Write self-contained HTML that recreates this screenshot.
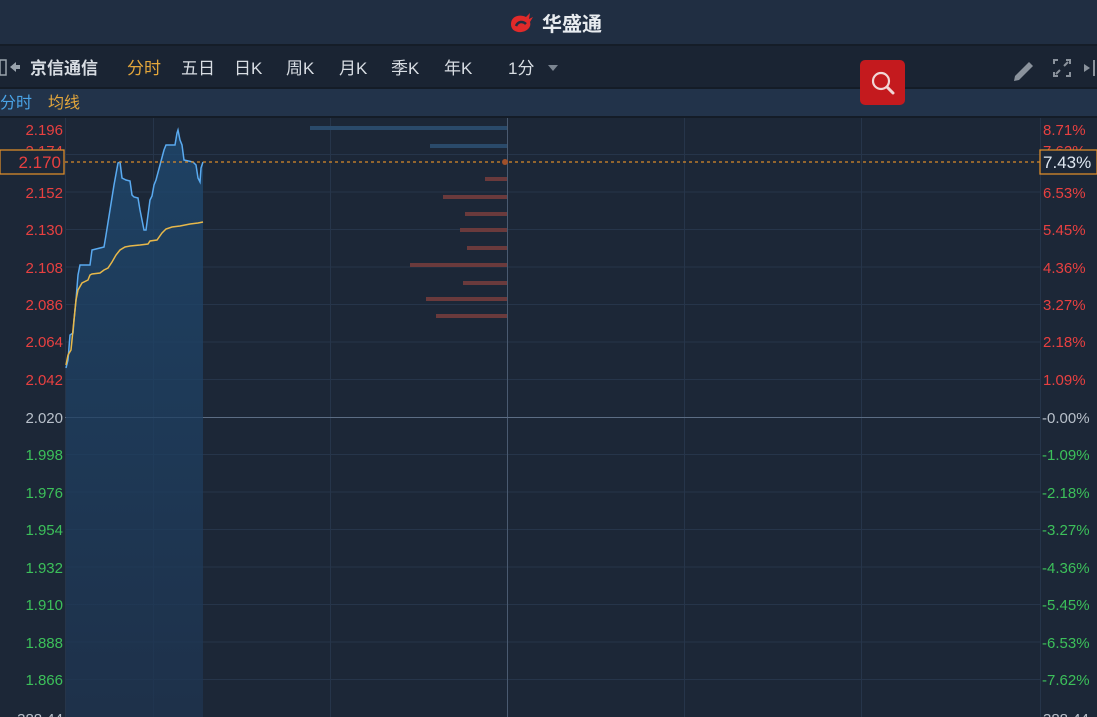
<!DOCTYPE html>
<html><head><meta charset="utf-8"><style>
html,body{margin:0;padding:0;background:#1c2737;width:1097px;height:717px;overflow:hidden;font-family:"Liberation Sans","Noto Sans CJK SC",sans-serif}
svg text{font-family:"Liberation Sans","Noto Sans CJK SC",sans-serif}
</style></head><body>
<svg width="1097" height="717" xmlns="http://www.w3.org/2000/svg">
<defs>
<linearGradient id="g" x1="0" y1="0" x2="0" y2="1"><stop offset="0" stop-color="#1e4a72"/><stop offset="1" stop-color="#1e3450"/></linearGradient>
</defs>
<!-- header -->
<rect x="0" y="0" width="1097" height="44" fill="#202e42"/>
<rect x="0" y="44" width="1097" height="2" fill="#151d28"/>
<g transform="translate(508,10)">
<path d="M3 14 C3 6 12 4 18 7 L22 3 L21 9 L25 7 L22 12 C24 18 17 23 10 22 C5 21 3 18 3 14 Z" fill="#e02a2a"/>
<path d="M8 16 C10 11 15 11 18 14" stroke="#202e42" stroke-width="2.5" fill="none"/>
</g>
<text x="542" y="31" fill="#e8ecf0" font-size="20" font-weight="bold">华盛通</text>
<!-- toolbar -->
<rect x="0" y="46" width="1097" height="41" fill="#1a2433"/>
<rect x="0" y="87" width="1097" height="2" fill="#141c27"/>
<rect x="0" y="60" width="6" height="15" fill="none" stroke="#9aa3ad" stroke-width="1.5"/>
<path d="M10 67 L16 62 L16 72 Z" fill="#9aa3ad"/><rect x="15" y="65" width="5" height="4" fill="#9aa3ad"/>
<g font-size="17" fill="#d8dde3">
<text x="30" y="74" font-weight="bold">京信通信</text>
<text x="127" y="74" fill="#e3a63b">分时</text>
<text x="181" y="74">五日</text>
<text x="234" y="74">日K</text>
<text x="286" y="74">周K</text>
<text x="339" y="74">月K</text>
<text x="391" y="74">季K</text>
<text x="444" y="74">年K</text>
<text x="508" y="74">1分</text>
</g>
<path d="M548 65 L558 65 L553 71 Z" fill="#7b8591"/>
<path d="M1015 76 L1029 62 L1033 66 L1019 80 L1014 81 Z" fill="#8a929c"/>
<g stroke="#8a929c" stroke-width="2" fill="none">
<path d="M1054 64 L1054 60 L1058 60 M1066 60 L1070 60 L1070 64 M1070 72 L1070 76 L1066 76 M1058 76 L1054 76 L1054 72"/>
<path d="M1060 70 L1056 74 M1064 66 L1068 62"/>
</g>
<path d="M1084 64 L1090 68 L1084 72 Z" fill="#8a929c"/><rect x="1093" y="60" width="2" height="16" fill="#8a929c"/>
<!-- legend -->
<rect x="0" y="89" width="1097" height="28" fill="#22334a"/>
<rect x="0" y="116" width="1097" height="2" fill="#141c27"/>
<text x="0" y="108" fill="#4aa3e6" font-size="16">分时</text>
<text x="48" y="108" fill="#e3a63b" font-size="16">均线</text>
<rect x="860" y="60" width="45" height="45" rx="5" fill="#c41a1e"/>
<circle cx="881" cy="81" r="8" fill="none" stroke="#f1d6d6" stroke-width="2.2"/>
<path d="M887 87 L893 93" stroke="#f1d6d6" stroke-width="3" stroke-linecap="round"/>
<!-- grid -->
<g stroke="#26354a" stroke-width="1">
<line x1="65" y1="154.5" x2="1040" y2="154.5"/><line x1="65" y1="192" x2="1040" y2="192"/><line x1="65" y1="229.5" x2="1040" y2="229.5"/><line x1="65" y1="267" x2="1040" y2="267"/><line x1="65" y1="304.5" x2="1040" y2="304.5"/><line x1="65" y1="342" x2="1040" y2="342"/><line x1="65" y1="379.5" x2="1040" y2="379.5"/>
<line x1="65" y1="454.5" x2="1040" y2="454.5"/><line x1="65" y1="492" x2="1040" y2="492"/><line x1="65" y1="529.5" x2="1040" y2="529.5"/><line x1="65" y1="567" x2="1040" y2="567"/><line x1="65" y1="604.5" x2="1040" y2="604.5"/><line x1="65" y1="642" x2="1040" y2="642"/><line x1="65" y1="679.5" x2="1040" y2="679.5"/>
<line x1="65.5" y1="118" x2="65.5" y2="717"/><line x1="153.5" y1="118" x2="153.5" y2="717"/><line x1="330.5" y1="118" x2="330.5" y2="717"/><line x1="684.5" y1="118" x2="684.5" y2="717"/><line x1="861.5" y1="118" x2="861.5" y2="717"/><line x1="1040.5" y1="118" x2="1040.5" y2="717"/>
</g>
<line x1="507.5" y1="118" x2="507.5" y2="717" stroke="#4a5a70"/>
<line x1="65" y1="417.5" x2="1040" y2="417.5" stroke="#5c6d84"/>
<!-- depth bars -->
<rect x="310" y="126" width="197" height="4" fill="#2a4a6a"/>
<rect x="430" y="144" width="77" height="4" fill="#2a4a6a"/>
<g fill="#6a3a3c">
<rect x="485" y="177" width="22" height="4"/><rect x="443" y="195" width="64" height="4"/><rect x="465" y="212" width="42" height="4"/><rect x="460" y="228" width="47" height="4"/><rect x="467" y="246" width="40" height="4"/><rect x="410" y="263" width="97" height="4"/><rect x="463" y="281" width="44" height="4"/><rect x="426" y="297" width="81" height="4"/><rect x="436" y="314" width="71" height="4"/>
</g>
<!-- area -->
<path d="M66 717 L66 368 L68 360 L70 335 L73 333 L74 320 L76 300 L78 275 L80 265 L90 265 L92 250 L104 247 L106 235 L110 210 L114 185 L118 163 L120 162 L122 178 L126 180 L130 181 L132 195 L134 197 L138 198 L140 210 L144 230 L146 230 L148 215 L150 200 L152 196 L154 185 L156 180 L160 165 L164 150 L166 145 L175 145 L177 133 L178 130 L180 140 L182 145 L184 160 L193 162 L196 165 L198 178 L200 182 L201 168 L203 162 L203 717 Z" fill="url(#g)" opacity="0.75"/>
<polyline fill="none" stroke="#5aaaf0" stroke-width="1.5" points="66,368 68,360 70,335 73,333 74,320 76,300 78,275 80,265 90,265 92,250 104,247 106,235 110,210 114,185 118,163 120,162 122,178 126,180 130,181 132,195 134,197 138,198 140,210 144,230 146,230 148,215 150,200 152,196 154,185 156,180 160,165 164,150 166,145 175,145 177,133 178,130 180,140 182,145 184,160 193,162 196,165 198,178 200,182 201,168 203,162"/>
<polyline fill="none" stroke="#e8b84a" stroke-width="1.5" points="66,365 68,355 71,350 74,320 76,300 78,290 82,283 88,280 90,275 92,274 100,273 104,270 108,268 112,262 116,255 120,250 125,247 130,246 140,245 148,244 150,241 157,240 162,233 166,229 172,227 180,226 190,224 198,223 203,222"/>
<line x1="65" y1="162" x2="1040" y2="162" stroke="#d98a2a" stroke-width="1.3" stroke-dasharray="3,3"/>
<circle cx="505" cy="162" r="3" fill="#a0502a"/>
<!-- left axis -->
<g font-size="15" text-anchor="end">
<g fill="#e84040"><text x="63" y="135">2.196</text><text x="63" y="156">2.174</text><text x="63" y="198">2.152</text><text x="63" y="235">2.130</text><text x="63" y="273">2.108</text><text x="63" y="310">2.086</text><text x="63" y="347">2.064</text><text x="63" y="385">2.042</text></g>
<text x="63" y="423" fill="#b8c0ca">2.020</text>
<g fill="#3cc05a"><text x="63" y="460">1.998</text><text x="63" y="498">1.976</text><text x="63" y="535">1.954</text><text x="63" y="573">1.932</text><text x="63" y="610">1.910</text><text x="63" y="648">1.888</text><text x="63" y="685">1.866</text></g>
<text x="63" y="724" fill="#b8c0ca">388.44</text>
</g>
<rect x="0" y="150" width="64" height="24" fill="#1c2737" stroke="#d98a2a" stroke-width="1.3"/>
<text x="61" y="168" fill="#e84040" font-size="17" text-anchor="end">2.170</text>
<!-- right axis -->
<g font-size="15">
<g fill="#e84040"><text x="1043" y="135">8.71%</text><text x="1043" y="156">7.62%</text><text x="1043" y="198">6.53%</text><text x="1043" y="235">5.45%</text><text x="1043" y="273">4.36%</text><text x="1043" y="310">3.27%</text><text x="1043" y="347">2.18%</text><text x="1043" y="385">1.09%</text></g>
<text x="1042" y="423" fill="#b8c0ca">-0.00%</text>
<g fill="#3cc05a"><text x="1042" y="460">-1.09%</text><text x="1042" y="498">-2.18%</text><text x="1042" y="535">-3.27%</text><text x="1042" y="573">-4.36%</text><text x="1042" y="610">-5.45%</text><text x="1042" y="648">-6.53%</text><text x="1042" y="685">-7.62%</text></g>
<text x="1043" y="724" fill="#b8c0ca">388.44</text>
</g>
<rect x="1040" y="150" width="57" height="24" fill="#1c2737" stroke="#d98a2a" stroke-width="1.3"/>
<text x="1043" y="168" fill="#dfe8f2" font-size="17">7.43%</text>
</svg>
</body></html>
